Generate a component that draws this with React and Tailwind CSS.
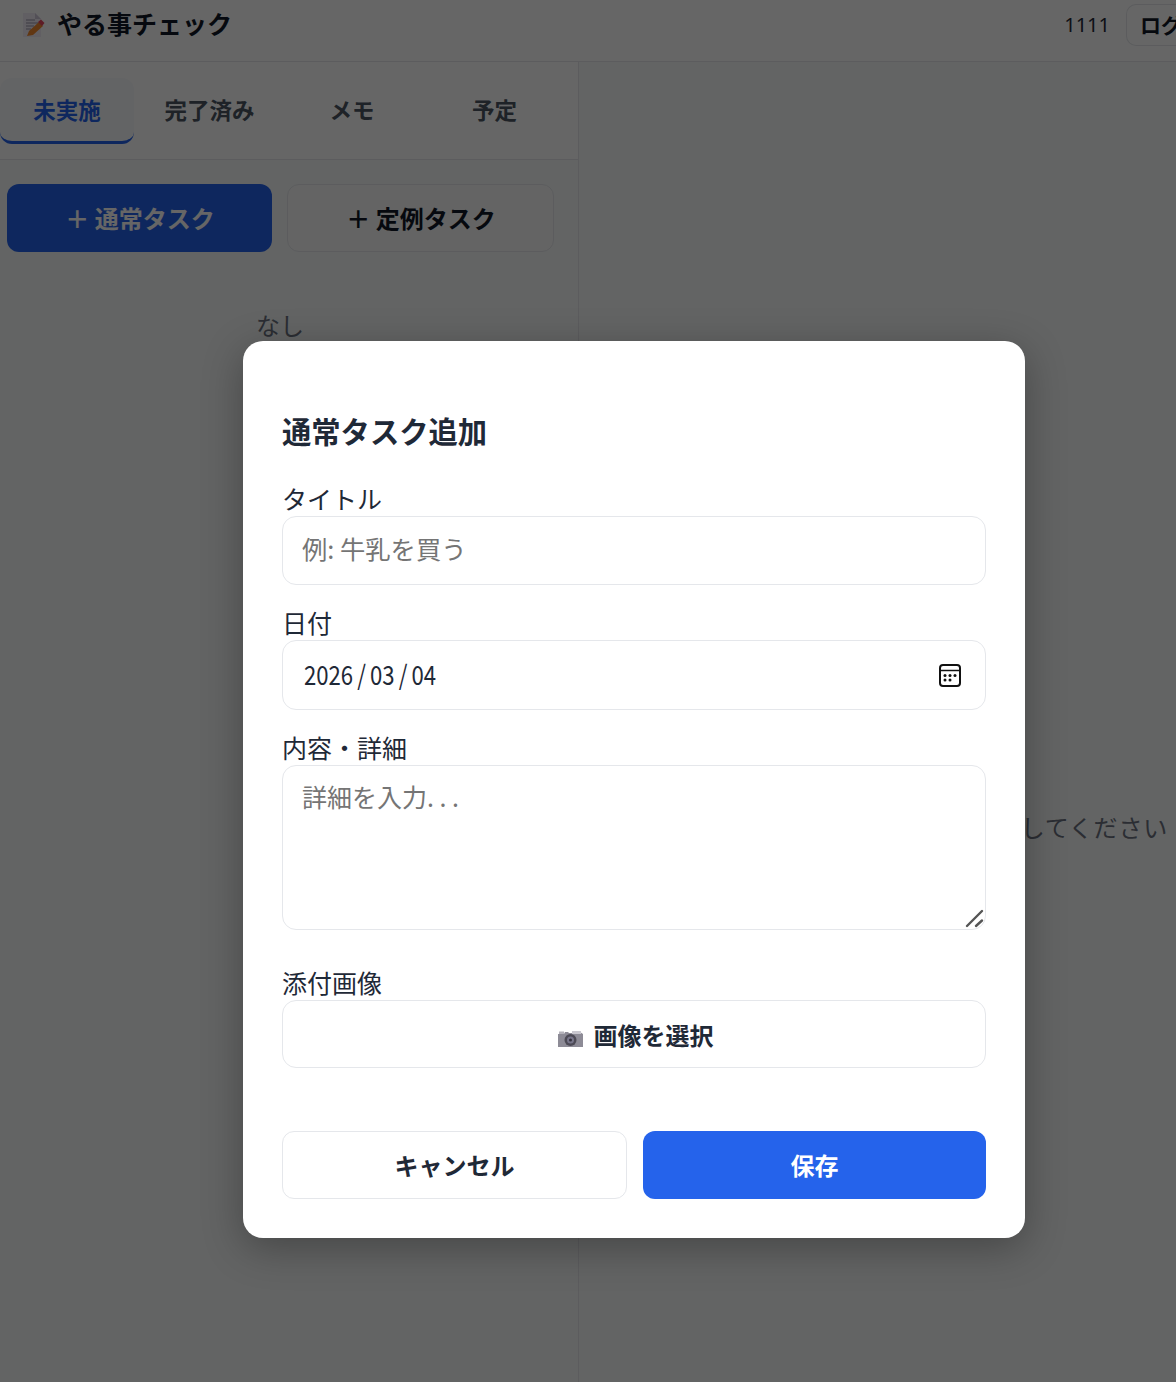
import React from "react";

const jp = "font-['Noto_Sans_CJK_JP','Noto_Sans',sans-serif]";

function MemoIcon() {
  return (
    <svg width="22" height="26" viewBox="0 0 22 26" className="shrink-0">
      <path d="M0 1h12l6 6v18H0z" fill="#f3eef8" />
      <path d="M12 1l6 6h-6z" fill="#cfc8da" />
      <path d="M3 8h9M3 11h12M3 14h8M3 17h5" stroke="#9a94a6" strokeWidth="1.2" />
      <path d="M4 24l2-5 10-9 4 4-10 9z" fill="#f28a2e" />
      <path d="M15 10l3-2.500 3.500 3.500-2.500 3z" fill="#e8475f" />
    </svg>
  );
}

function CameraIcon() {
  return (
    <svg width="25" height="18" viewBox="0 0 25 18" className="mt-[9px] shrink-0">
      <path d="M0 4h6l1-2h3l1 1h7l2-1h2l3 2v13H0z" fill="#8d8b96" />
      <rect x="1" y="1.500" width="5" height="2.500" fill="#b5b3bb" />
      <rect x="14" y="1" width="9" height="3" fill="#c9c7cf" />
      <circle cx="12.500" cy="10" r="6" fill="#4c4a55" />
      <circle cx="12.500" cy="10" r="3.500" fill="#77758a" />
      <circle cx="12.500" cy="10" r="1.500" fill="#33313c" />
    </svg>
  );
}

function CalendarIcon() {
  return (
    <svg width="22" height="23" viewBox="0 0 22 23" className="shrink-0">
      <rect x="1" y="1" width="20" height="21" rx="3" fill="none" stroke="#111" strokeWidth="2" />
      <path d="M1 6.500h20" stroke="#111" strokeWidth="1.500" />
      <g fill="#111">
        <circle cx="6" cy="11.500" r="1.500" />
        <circle cx="11" cy="11.500" r="1.500" />
        <circle cx="16" cy="11.500" r="1.500" />
        <circle cx="6" cy="16" r="1.500" />
        <circle cx="11" cy="16" r="1.500" />
      </g>
    </svg>
  );
}

function Field({ label, children, className = "" }) {
  return (
    <div className={className}>
      <label className="block h-[34px] text-[25px] leading-[32px] text-[#1f2937]">{label}</label>
      {children}
    </div>
  );
}

export default function App() {
  const tabs = ["未実施", "完了済み", "メモ", "予定"];

  return (
    <div className={`relative h-[1382px] w-[1176px] overflow-hidden bg-[#f8fbfa] ${jp}`}>
      {/* header */}
      <header className="flex h-[62px] items-center justify-between border-b border-[#e5e7eb] bg-white pb-[12px] pl-[23px]">
        <div className="flex items-center gap-[12px]">
          <MemoIcon />
          <h1 className="mb-[4px] text-[25px] font-bold leading-[34px] text-[#111827]">やる事チェック</h1>
        </div>
        <div className="flex items-center gap-[16px]">
          <span className="font-['Noto_Sans',sans-serif] text-[20px] leading-[28px] text-[#1f2937]">1111</span>
          <button className="h-[42px] w-[50px] overflow-hidden whitespace-nowrap rounded-l-[10px] border border-r-0 border-[#e5e7eb] pl-[13px] text-left text-[21px] font-bold text-[#111827]">
            ログ
          </button>
        </div>
      </header>

      <div className="flex h-[1320px]">
        {/* left panel */}
        <aside className="w-[579px] shrink-0 border-r border-[#e5e7eb]">
          <div className="flex h-[98px] gap-[8.500px] border-b border-[#e5e7eb] bg-white pt-[16px]">
            {tabs.map((t, i) => (
              <button
                key={t}
                className={`h-[66px] w-[134px] rounded-[12px] text-[22.500px] font-bold ${
                  i === 0
                    ? "border-b-[3px] border-[#2563eb] bg-[#f8fafc] text-[#2563eb]"
                    : "pb-[2px] text-[#4b5563]"
                }`}
              >
                {t}
              </button>
            ))}
          </div>
          <div className="flex gap-[15px] pl-[7px] pt-[24px]">
            <button className="h-[68px] w-[265px] rounded-[12px] bg-[#2563eb] pl-[1px] text-[24px] font-bold text-white">
              ＋ 通常タスク
            </button>
            <button className="h-[68px] w-[267px] rounded-[12px] border border-[#e5e7eb] bg-[#f9fafb] pl-[1px] text-[24px] font-bold text-[#111827]">
              ＋ 定例タスク
            </button>
          </div>
          <p className="w-[560px] pt-[56px] text-center text-[24px] leading-[34px] text-[#6b7280]">なし</p>
        </aside>

        {/* right panel */}
        <main className="flex flex-1 justify-end whitespace-nowrap pr-[8px] pt-[748px]">
          <p className="text-[24px] leading-[34px] tracking-[0.8px] text-[#6b7280]">してください</p>
        </main>
      </div>

      {/* modal */}
      <div className="absolute inset-0 bg-black/60 pl-[243px] pt-[341px]">
        <div className="h-[897px] w-[782px] rounded-[20px] bg-white px-[39px] pt-[71px] shadow-[0_10px_40px_rgba(0,0,0,0.3)]">
          <h2 className="h-[40px] text-[29.300px] font-bold leading-[36px] text-[#1f2937]">通常タスク追加</h2>

          <Field label="タイトル" className="mt-[30px]">
            <input
              placeholder="例: 牛乳を買う"
              className="h-[69px] w-full rounded-[14px] border border-[#e5e7eb] px-[19px] pb-[5px] text-[25.300px] outline-none placeholder:text-[#757575]"
            />
          </Field>

          <Field label="日付" className="mt-[21px]">
            <div className="flex h-[70px] items-center justify-between rounded-[14px] border border-[#e5e7eb] pl-[20.500px] pr-[24px]">
              <span className="mb-[2px] origin-left scale-x-[0.82] whitespace-nowrap text-[27px] text-[#1f2937]">
                2026<span className="px-[5px]">/</span>03<span className="px-[5px]">/</span>04
              </span>
              <CalendarIcon />
            </div>
          </Field>

          <Field label="内容・詳細" className="mt-[21px]">
            <div className="relative">
              <textarea
                aria-label="内容・詳細"
                className="block h-[165px] w-full resize-none rounded-[14px] border border-[#e5e7eb] px-[19px] py-[12px] text-[25px] outline-none"
              />
              <span className="pointer-events-none absolute left-[20px] top-[13px] text-[25px] leading-[37px] text-[#757575]">
                詳細を入力<span className="tracking-[5.500px]">...</span>
              </span>
              <svg width="20" height="20" viewBox="0 0 20 20" className="absolute bottom-[1px] right-[1px]">
                <path d="M2 17L17 2M11 17l6-5.500" stroke="#555" strokeWidth="2.400" strokeLinecap="round" />
              </svg>
            </div>
          </Field>

          <Field label="添付画像" className="mt-[36px]">
            <button className="flex h-[68px] w-full items-center justify-center gap-[11px] rounded-[14px] border border-[#e5e7eb] pl-[3px] pt-[1px] text-[24px] font-bold text-[#1f2937]">
              <CameraIcon />
              画像を選択
            </button>
          </Field>

          <div className="mt-[63px] flex gap-[16px]">
            <button className="h-[68px] w-[345px] rounded-[12px] border border-[#e5e7eb] text-[24px] font-bold text-[#1f2937]">
              キャンセル
            </button>
            <button className="h-[68px] w-[343px] rounded-[12px] bg-[#2563eb] text-[24px] font-bold text-white">
              保存
            </button>
          </div>
        </div>
      </div>
    </div>
  );
}
